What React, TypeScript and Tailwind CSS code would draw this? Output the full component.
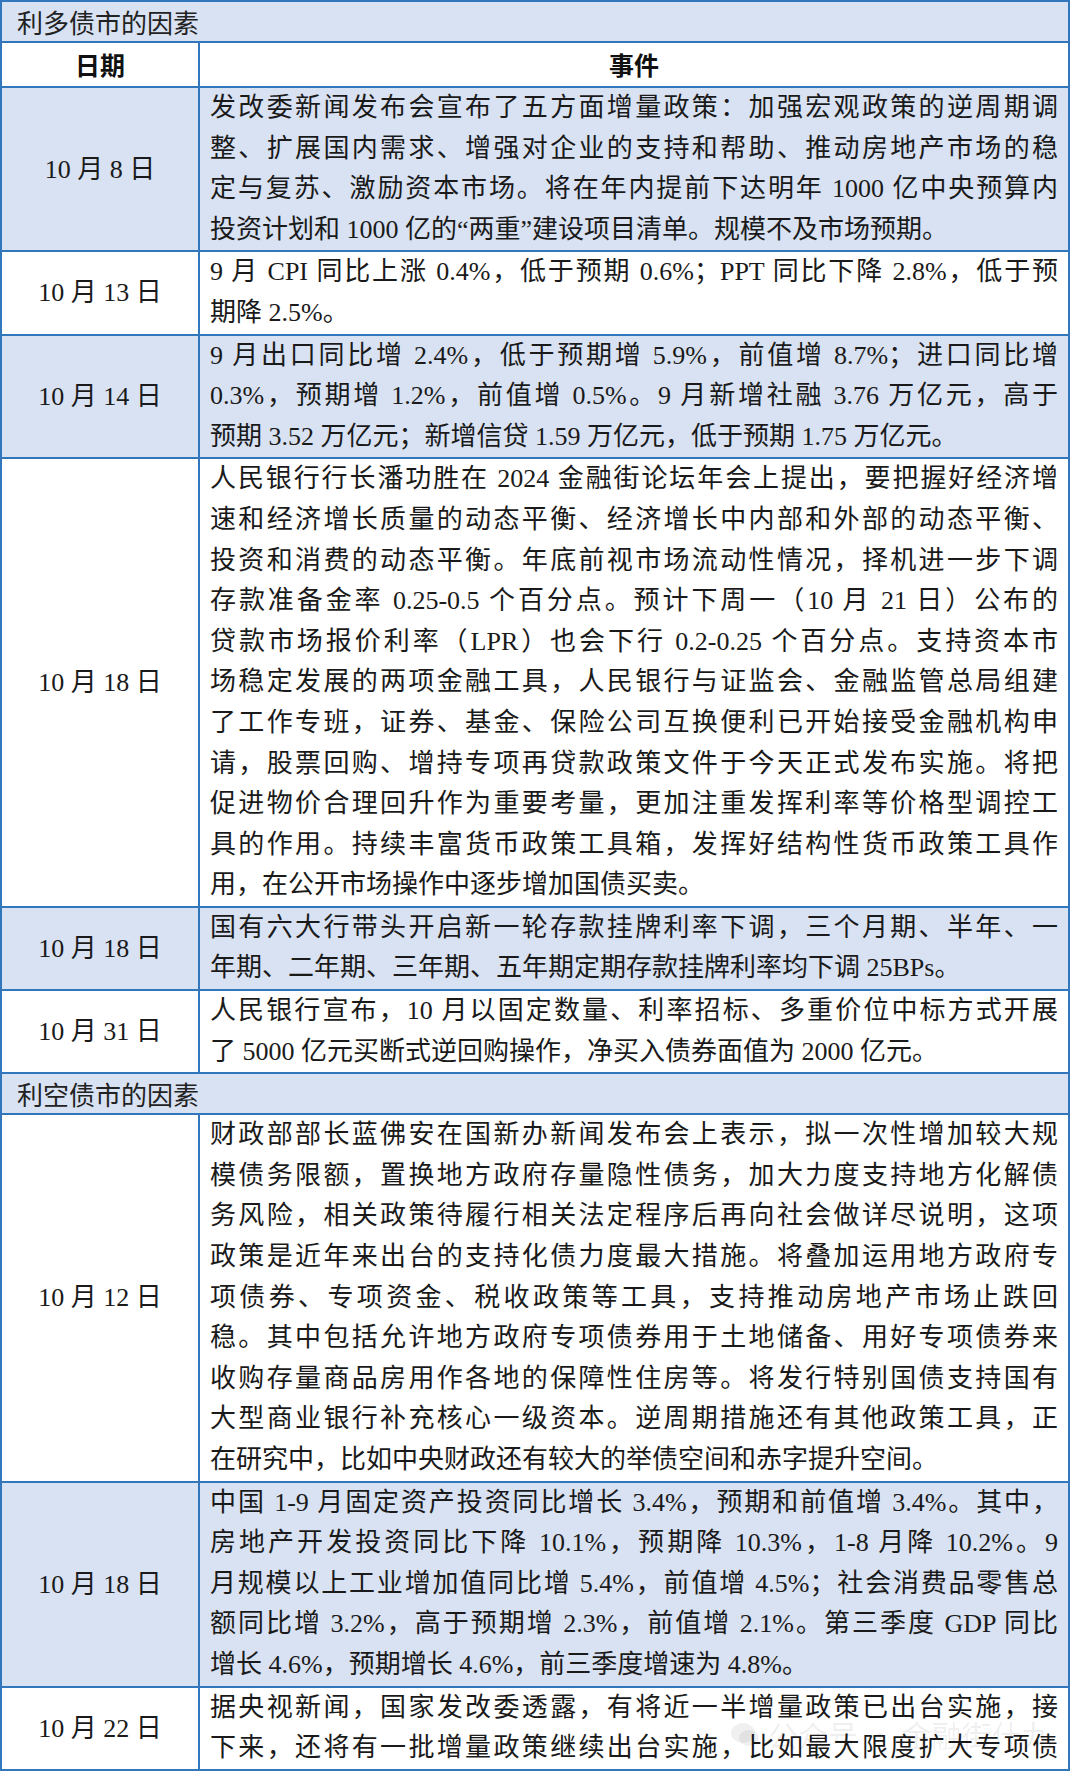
type Row = { date: string; lines: string[]; blue: boolean };

const bullish: Row[] = [
  {
    date: "10 月 8 日",
    blue: true,
    lines: [
      "发改委新闻发布会宣布了五方面增量政策：加强宏观政策的逆周期调",
      "整、扩展国内需求、增强对企业的支持和帮助、推动房地产市场的稳",
      "定与复苏、激励资本市场。将在年内提前下达明年 1000 亿中央预算内",
      "投资计划和 1000 亿的“两重”建设项目清单。规模不及市场预期。",
    ],
  },
  {
    date: "10 月 13 日",
    blue: false,
    lines: [
      "9 月 CPI 同比上涨 0.4%，低于预期 0.6%；PPT 同比下降 2.8%，低于预",
      "期降 2.5%。",
    ],
  },
  {
    date: "10 月 14 日",
    blue: true,
    lines: [
      "9 月出口同比增 2.4%，低于预期增 5.9%，前值增 8.7%；进口同比增",
      "0.3%，预期增 1.2%，前值增 0.5%。9 月新增社融 3.76 万亿元，高于",
      "预期 3.52 万亿元；新增信贷 1.59 万亿元，低于预期 1.75 万亿元。",
    ],
  },
  {
    date: "10 月 18 日",
    blue: false,
    lines: [
      "人民银行行长潘功胜在 2024 金融街论坛年会上提出，要把握好经济增",
      "速和经济增长质量的动态平衡、经济增长中内部和外部的动态平衡、",
      "投资和消费的动态平衡。年底前视市场流动性情况，择机进一步下调",
      "存款准备金率 0.25-0.5 个百分点。预计下周一（10 月 21 日）公布的",
      "贷款市场报价利率（LPR）也会下行 0.2-0.25 个百分点。支持资本市",
      "场稳定发展的两项金融工具，人民银行与证监会、金融监管总局组建",
      "了工作专班，证券、基金、保险公司互换便利已开始接受金融机构申",
      "请，股票回购、增持专项再贷款政策文件于今天正式发布实施。将把",
      "促进物价合理回升作为重要考量，更加注重发挥利率等价格型调控工",
      "具的作用。持续丰富货币政策工具箱，发挥好结构性货币政策工具作",
      "用，在公开市场操作中逐步增加国债买卖。",
    ],
  },
  {
    date: "10 月 18 日",
    blue: true,
    lines: [
      "国有六大行带头开启新一轮存款挂牌利率下调，三个月期、半年、一",
      "年期、二年期、三年期、五年期定期存款挂牌利率均下调 25BPs。",
    ],
  },
  {
    date: "10 月 31 日",
    blue: false,
    lines: [
      "人民银行宣布，10 月以固定数量、利率招标、多重价位中标方式开展",
      "了 5000 亿元买断式逆回购操作，净买入债券面值为 2000 亿元。",
    ],
  },
];

const bearish: Row[] = [
  {
    date: "10 月 12 日",
    blue: false,
    lines: [
      "财政部部长蓝佛安在国新办新闻发布会上表示，拟一次性增加较大规",
      "模债务限额，置换地方政府存量隐性债务，加大力度支持地方化解债",
      "务风险，相关政策待履行相关法定程序后再向社会做详尽说明，这项",
      "政策是近年来出台的支持化债力度最大措施。将叠加运用地方政府专",
      "项债券、专项资金、税收政策等工具，支持推动房地产市场止跌回",
      "稳。其中包括允许地方政府专项债券用于土地储备、用好专项债券来",
      "收购存量商品房用作各地的保障性住房等。将发行特别国债支持国有",
      "大型商业银行补充核心一级资本。逆周期措施还有其他政策工具，正",
      "在研究中，比如中央财政还有较大的举债空间和赤字提升空间。",
    ],
  },
  {
    date: "10 月 18 日",
    blue: true,
    lines: [
      "中国 1-9 月固定资产投资同比增长 3.4%，预期和前值增 3.4%。其中，",
      "房地产开发投资同比下降 10.1%，预期降 10.3%，1-8 月降 10.2%。9",
      "月规模以上工业增加值同比增 5.4%，前值增 4.5%；社会消费品零售总",
      "额同比增 3.2%，高于预期增 2.3%，前值增 2.1%。第三季度 GDP 同比",
      "增长 4.6%，预期增长 4.6%，前三季度增速为 4.8%。",
    ],
  },
  {
    date: "10 月 22 日",
    blue: false,
    lines: [
      "据央视新闻，国家发改委透露，有将近一半增量政策已出台实施，接",
      "下来，还将有一批增量政策继续出台实施，比如最大限度扩大专项债",
    ],
  },
];

function SectionTitle({ text }: { text: string }) {
  return (
    <div className="h-[41px] flex items-center pl-[15px] bg-[#d9e2f3] border-b-2 border-[#3276bb] text-[26px] text-[#222] font-['Noto_Sans_CJK_SC',sans-serif]">
      {text}
    </div>
  );
}

function DataRow({ row, justifyLast }: { row: Row; justifyLast?: boolean }) {
  return (
    <div
      className={`flex border-b-2 border-[#3276bb] ${row.blue ? "bg-[#d9e2f3]" : "bg-white"}`}
    >
      <div className="w-[198px] shrink-0 border-r-2 border-[#3276bb] flex items-center justify-center text-[26px] text-[#1a1a1a]">
        {row.date}
      </div>
      <div className="flex-1 px-[10px] text-[26px] leading-[40.6px] text-[#1a1a1a]">
        {row.lines.map((line, i) => {
          const last = i === row.lines.length - 1 && !justifyLast;
          return (
            <div key={i} className={last ? "text-left" : "text-justify [text-align-last:justify]"}>
              {line}
            </div>
          );
        })}
      </div>
    </div>
  );
}

export default function App() {
  return (
    <div className="relative w-[1080px] h-[1778px] overflow-hidden bg-white font-['Liberation_Serif','Noto_Sans_CJK_SC',serif]">
      <div className="w-[1070px] border-x-2 border-t-2 border-[#3276bb]">
        <SectionTitle text="利多债市的因素" />
        <div className="flex h-[45px] border-b-2 border-[#3276bb] bg-white text-[25px] font-bold text-[#111] font-['Noto_Sans_CJK_SC',sans-serif]">
          <div className="w-[198px] shrink-0 border-r-2 border-[#3276bb] flex items-center justify-center">
            日期
          </div>
          <div className="flex-1 flex items-center justify-center">事件</div>
        </div>
        {bullish.map((r, i) => (
          <DataRow key={i} row={r} />
        ))}
        <SectionTitle text="利空债市的因素" />
        {bearish.map((r, i) => (
          <DataRow key={i} row={r} justifyLast={i === bearish.length - 1} />
        ))}
      </div>

      {/* platform watermark */}
      <div className="pointer-events-none absolute left-[730px] top-[1712px] flex items-center gap-2 text-[30px] text-black/[0.07] font-['Noto_Sans_CJK_SC',sans-serif]">
        <svg width="30" height="28" viewBox="0 0 30 28" className="opacity-80">
          <ellipse cx="13" cy="12" rx="12" ry="10" fill="currentColor" />
          <ellipse cx="19" cy="17" rx="10" ry="8" fill="currentColor" />
        </svg>
        <span>公众号 · 金融街什九</span>
      </div>
    </div>
  );
}
